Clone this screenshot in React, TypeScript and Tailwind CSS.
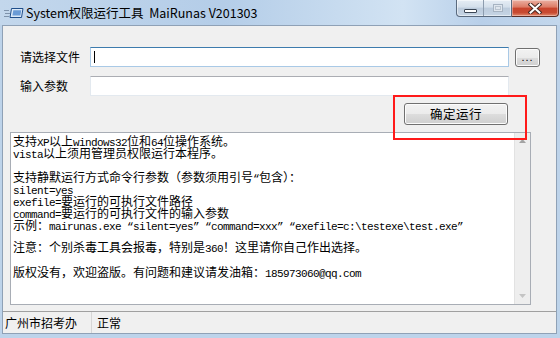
import React from "react";

const isMono = (s: string) => /^[\x20-\x7E“”]+$/.test(s);

function Mix({ text }: { text: string }) {
  const parts = text.split(/([\x20-\x7E“”]+)/);
  return (
    <>
      {parts.map((p, i) =>
        p === "" ? null : isMono(p) ? (
          <span
            key={i}
            className="font-['Liberation_Mono',monospace] text-[11px] tracking-[-0.6px] whitespace-pre leading-[12px]"
          >
            {p}
          </span>
        ) : (
          <span key={i} className="leading-[12px]">
            {p}
          </span>
        )
      )}
    </>
  );
}

function Line({ text, className = "" }: { text: string; className?: string }) {
  return (
    <div className={"h-[12px] leading-[12px] whitespace-pre text-[12px] text-black " + className}>
      <Mix text={text} />
    </div>
  );
}

function WinButton({ className = "", children }: { className?: string; children?: React.ReactNode }) {
  return (
    <div
      className={
        "border border-[#707070] rounded-[3px] bg-[linear-gradient(to_bottom,#f2f2f2_0%,#ebebeb_50%,#dddddd_50%,#cfcfcf_100%)] shadow-[inset_0_0_0_1px_#fcfcfc] flex items-center justify-center text-black " +
        className
      }
    >
      {children}
    </div>
  );
}

export default function App() {
  return (
    <div className="w-[560px] h-[338px] relative overflow-hidden bg-[#bdd3ea] flex flex-col font-['Noto_Sans_CJK_SC',sans-serif]">
      {/* Title bar */}
      <div className="h-[25px] shrink-0 flex items-start bg-[linear-gradient(to_right,#c3d7ec_0%,#b4cde8_40%,#d2e3f3_72%,#b8cfe9_86%,#c3d7ec_100%)]">
        <div className="flex items-center h-[25px] pl-[4px]">
          <svg width="20" height="12" viewBox="0 0 20 12" className="mt-[1px]">
            <path d="M0 3.5h5M1 6.5h5M0 9.5h5" stroke="#7f93ab" strokeWidth="1" />
            <path d="M7.5 1.5h11.5l-1.5 9h-11.5z" fill="#dbe9f8" stroke="#1f4e8a" strokeWidth="1" />
            <path d="M9.3 3.3h8l-0.9 5.3h-8z" fill="#6a9bd6" />
          </svg>
          <span className="ml-[2px] text-[12.5px] leading-[14px] text-black whitespace-pre">
            System权限运行工具  MaiRunas V201303
          </span>
        </div>
        <div className="ml-auto mr-[1px] flex h-[17px]">
          <div className="w-[56px] h-[17px] flex border border-t-0 border-[#5a6a7e] rounded-bl-[4px] overflow-hidden bg-[linear-gradient(to_bottom,#e6edf5_0%,#d4dfeb_45%,#bccbdc_50%,#c6d5e5_100%)] shadow-[inset_0_0_0_1px_rgba(255,255,255,0.5)]">
            <div className="w-[27px] h-full flex items-end justify-center pb-[3px] border-r border-[#8d9cae]">
              <div className="w-[13px] h-[4px] bg-white border border-[#3b4655] rounded-[1px]" />
            </div>
            <div className="flex-1 h-full flex items-center justify-center">
              <div className="w-[10px] h-[8px] border border-[#a6b3c2] bg-[#dfe6ee] flex items-center justify-center">
                <div className="w-[6px] h-[4px] border border-[#b9c4d0]" />
              </div>
            </div>
          </div>
          <div className="w-[47px] h-[17px] border border-t-0 border-l-0 border-[#5a2c24] rounded-br-[4px] bg-[linear-gradient(to_bottom,#ebb0a2_0%,#dc7a64_45%,#c9442c_50%,#c74a31_78%,#e3896c_100%)] flex items-center justify-center shadow-[inset_0_0_0_1px_rgba(255,255,255,0.35)]">
            <svg width="14" height="11" viewBox="0 0 14 11">
              <path d="M2.5 1.5l9 8M11.5 1.5l-9 8" stroke="#4a2a24" strokeWidth="4" strokeLinecap="square" />
              <path d="M2.5 1.5l9 8M11.5 1.5l-9 8" stroke="#ffffff" strokeWidth="2" strokeLinecap="square" />
            </svg>
          </div>
        </div>
      </div>

      {/* Client area */}
      <div className="flex-1 ml-[2px] mr-[3px] mb-[4px] bg-[#f0f0f0] border border-[#8fa1b6] flex flex-col text-[12px] text-black">
        {/* Row 1 */}
        <div className="flex items-start h-[20px] mt-[21px]">
          <div className="ml-[17px] w-[70px] h-[20px] leading-[20px] text-[12px]">请选择文件</div>
          <div className="w-[419px] h-[20px] bg-white border border-[#a9c9e6] border-t-[#3d7bad] relative">
            <div className="absolute left-[3px] top-[3px] w-[1px] h-[12px] bg-black" />
          </div>
          <WinButton className="ml-[6px] mt-[1px] w-[25px] h-[19px]">
            <span className="font-['Liberation_Sans',sans-serif] text-[11px] leading-[10px] tracking-[1px] pb-[2px]">...</span>
          </WinButton>
        </div>
        {/* Row 2 */}
        <div className="flex items-start h-[20px] mt-[9px]">
          <div className="ml-[17px] w-[70px] h-[20px] leading-[20px] text-[12px]">输入参数</div>
          <div className="w-[419px] h-[20px] bg-white border border-[#e3e9ef] border-t-[#abadb3]" />
        </div>
        {/* Run button */}
        <div className="flex mt-[7px] h-[22px]">
          <WinButton className="ml-[401px] w-[104px] h-[22px]">
            <span className="text-[12.5px] leading-[14px] tracking-[0.5px]">确定运行</span>
          </WinButton>
        </div>
        {/* Text area */}
        <div className="mt-[7px] ml-[7px] w-[521px] h-[173px] bg-white border border-[#a8adb5] flex">
          <div className="flex-1 pl-[2px] pt-[2px] overflow-hidden">
            <Line text="支持XP以上windows32位和64位操作系统。" />
            <Line text="vista以上须用管理员权限运行本程序。" />
            <Line text="" />
            <Line text="支持静默运行方式命令行参数（参数须用引号“包含）：" />
            <Line text="silent=yes" />
            <Line text="exefile=要运行的可执行文件路径" />
            <Line text="command=要运行的可执行文件的输入参数" />
            <Line text="示例：mairunas.exe “silent=yes” “command=xxx” “exefile=c:\testexe\test.exe”" />
            <Line text="注意：个别杀毒工具会报毒，特别是360！这里请你自己作出选择。" className="mt-[10px]" />
            <Line text="版权没有，欢迎盗版。有问题和建议请发油箱：185973060@qq.com" className="mt-[13px]" />
          </div>
          <div className="w-[16px] h-full bg-[#eeeeee] border-l border-[#e2e2e2] flex flex-col items-center justify-between py-[6px]">
            <svg width="7" height="4" viewBox="0 0 7 4">
              <path d="M0 4L3.5 0L7 4z" fill="#a3a3a3" />
            </svg>
            <svg width="7" height="4" viewBox="0 0 7 4">
              <path d="M0 0L3.5 4L7 0z" fill="#c4c4c4" />
            </svg>
          </div>
        </div>
        {/* Status bar */}
        <div className="mt-auto h-[22px] border-t border-[#a0a0a0] flex items-stretch">
          <div className="w-[89px] pl-[2px] border-r border-[#d6d6d6] flex items-center text-[12px]">广州市招考办</div>
          <div className="pl-[5px] flex items-center text-[12px]">正常</div>
        </div>
      </div>

      {/* Red annotation */}
      <div className="absolute left-[393px] top-[95px] w-[134px] h-[45px] border-2 border-[#ff1a1a]" />
    </div>
  );
}
